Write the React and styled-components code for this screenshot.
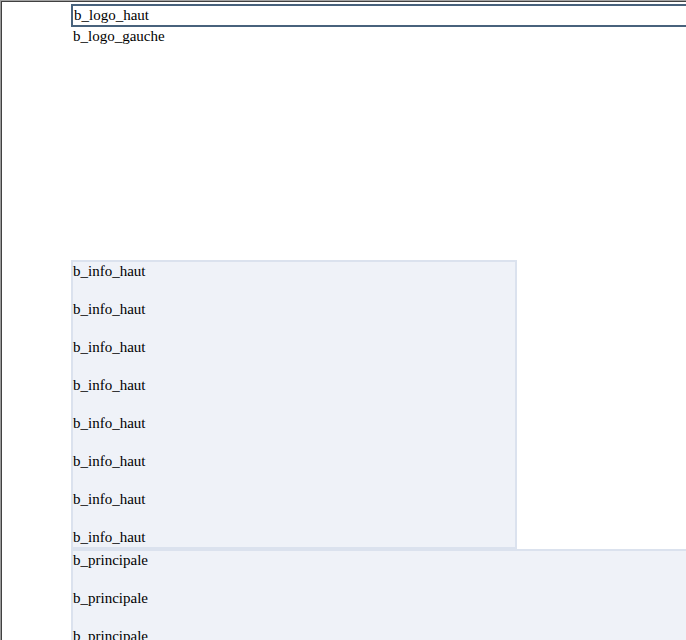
import React from "react";
import styled, { createGlobalStyle } from "styled-components";

const Global = createGlobalStyle`
  html, body { margin: 0; padding: 0; background: #ffffff; }
  body { font-family: "Liberation Serif", "Times New Roman", serif; font-size: 15px; color: #000; overflow: hidden; }
`;

const Frame = styled.div`
  height: 640px;
  border-top: 1px solid #a3a3a3;
  box-shadow: inset 0 1px 0 #404040;
  border-left: 1px solid #9a9a9a;
  overflow: hidden;
  position: relative;
`;

const FrameEdge = styled.div`
  border-left: 1px solid #404040;
  height: 100%;
`;

const Content = styled.div`
  padding: 3px 0 0 69px;
`;

const Line = styled.div`
  line-height: 19px;
  height: 19px;
  padding-left: 2px;
  white-space: nowrap;
`;

const LogoHaut = styled.div`
  border: 2px solid #48627c;
  width: calc(100% + 20px);
  height: 19px;
  line-height: 19px;
  padding-left: 1px;
  box-sizing: content-box;
`;

const LogoGauche = styled.div`
  height: 233px;
`;

const Panel = styled.div`
  background: #eff2f8;
  border: 2px solid #dbe2ee;
  width: ${(p) => p.$width};
  box-sizing: border-box;
  display: flex;
  flex-direction: column;
  gap: 19px;
  padding-bottom: ${(p) => p.$pb || 0}px;
`;

const PanelLine = styled.div`
  line-height: 19px;
  height: 19px;
  padding-left: 0px;
  white-space: nowrap;
`;

export default function App() {
  const infos = Array.from({ length: 8 }, () => "b_info_haut");
  const principales = Array.from({ length: 4 }, () => "b_principale");
  return (
    <>
      <Global />
      <Frame>
        <FrameEdge>
          <Content>
            <LogoHaut>b_logo_haut</LogoHaut>
            <LogoGauche>
              <Line>b_logo_gauche</Line>
            </LogoGauche>
            <Panel $width="446px">
              {infos.map((t, i) => (
                <PanelLine key={i}>{t}</PanelLine>
              ))}
            </Panel>
            <Panel $width="calc(100% + 20px)">
              {principales.map((t, i) => (
                <PanelLine key={i}>{t}</PanelLine>
              ))}
            </Panel>
          </Content>
        </FrameEdge>
      </Frame>
    </>
  );
}
